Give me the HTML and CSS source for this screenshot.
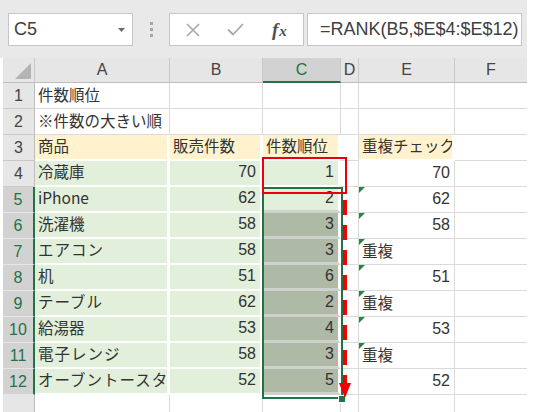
FILE: index.html
```html
<!DOCTYPE html>
<html lang="ja">
<head>
<meta charset="utf-8">
<title>RANK</title>
<link rel="stylesheet" href="styles.css">
</head>
<body>
<div class="app">
  <div class="topbar">
    <div class="namebox">
      <span class="nb-text">C5</span>
      <svg class="caret" width="7" height="4" viewBox="0 0 7 4"><path d="M0 0H7L3.5 4Z" fill="#6b6b6b"/></svg>
    </div>
    <div class="grip"><i></i><i></i><i></i></div>
    <div class="fxbox">
      <svg class="ic-x" width="14" height="14" viewBox="0 0 14 14"><path d="M1 1L13 13M13 1L1 13" stroke="#a8a8a8" stroke-width="1.6" fill="none"/></svg>
      <svg class="ic-ok" width="17" height="13" viewBox="0 0 17 13"><path d="M1 6.5L6 11.5L16 1" stroke="#a8a8a8" stroke-width="1.8" fill="none"/></svg>
      <span class="fx"><i>f</i><i class="fx2">x</i></span>
    </div>
    <div class="formula">=RANK(B5,$E$4:$E$12)</div>
  </div>
  <div class="sheet">
    <div class="h corner"><svg width="16" height="16" viewBox="0 0 16 16"><path d="M16 0V16H0Z" fill="#b4b4b4"/></svg></div>
    <div class="h">A</div><div class="h">B</div><div class="h hsel">C</div><div class="h">D</div><div class="h">E</div><div class="h">F</div>

    <div class="r">1</div><div class="c">件数順位</div><div class="c"></div><div class="c"></div><div class="c"></div><div class="c"></div><div class="c"></div>
    <div class="r">2</div><div class="c">※件数の大きい順</div><div class="c"></div><div class="c"></div><div class="c"></div><div class="c"></div><div class="c"></div>
    <div class="r">3</div><div class="c y">商品</div><div class="c y">販売件数</div><div class="c y">件数順位</div><div class="c"></div><div class="c y">重複チェック</div><div class="c"></div>
    <div class="r">4</div><div class="c g">冷蔵庫</div><div class="c g n">70</div><div class="c g n">1</div><div class="c"></div><div class="c n">70</div><div class="c"></div>
    <div class="r rs">5</div><div class="c g">iPhone</div><div class="c g n">62</div><div class="c g n act">2</div><div class="c"></div><div class="c n err">62</div><div class="c"></div>
    <div class="r rs">6</div><div class="c g">洗濯機</div><div class="c g n">58</div><div class="c s n">3</div><div class="c"></div><div class="c n err">58</div><div class="c"></div>
    <div class="r rs">7</div><div class="c g kana">エアコン</div><div class="c g n">58</div><div class="c s n">3</div><div class="c"></div><div class="c err">重複</div><div class="c"></div>
    <div class="r rs">8</div><div class="c g">机</div><div class="c g n">51</div><div class="c s n">6</div><div class="c"></div><div class="c n err">51</div><div class="c"></div>
    <div class="r rs">9</div><div class="c g kana">テーブル</div><div class="c g n">62</div><div class="c s n">2</div><div class="c"></div><div class="c err">重複</div><div class="c"></div>
    <div class="r rs">10</div><div class="c g">給湯器</div><div class="c g n">53</div><div class="c s n">4</div><div class="c"></div><div class="c n err">53</div><div class="c"></div>
    <div class="r rs">11</div><div class="c g kana">電子レンジ</div><div class="c g n">58</div><div class="c s n">3</div><div class="c"></div><div class="c err">重複</div><div class="c"></div>
    <div class="r rs">12</div><div class="c g kana">オーブントースター</div><div class="c g n">52</div><div class="c s n">5</div><div class="c"></div><div class="c n">52</div><div class="c"></div>
    <div class="r"></div><div class="c"></div><div class="c"></div><div class="c"></div><div class="c"></div><div class="c"></div><div class="c"></div>

    <div class="selbox"></div>
    <div class="handle"></div>
    <div class="redbox"></div>
    <svg class="arrow" width="14" height="200" viewBox="0 0 14 200">
      <path d="M7 0V184" stroke="#f00000" stroke-width="4" stroke-dasharray="15 10" fill="none"/>
      <path d="M1 183H13L7 198Z" fill="#f00000"/>
    </svg>
  </div>
</div>
</body>
</html>
```

FILE: styles.css
```css
html, body {
  margin: 0;
  padding: 0;
  background: #ffffff;
}
body {
  width: 544px;
  height: 412px;
  overflow: hidden;
}
.app {
  width: 527px;
}
.topbar {
  height: 58px;
  box-sizing: border-box;
  background: #e9e9e9;
  display: flex;
  align-items: flex-start;
  padding-top: 13px;
}
.namebox {
  margin-left: 8px;
  width: 125px;
  height: 33px;
  box-sizing: border-box;
  background: #fff;
  border: 1px solid #c6c6c6;
  display: flex;
  align-items: center;
  justify-content: space-between;
  padding: 0 7px 0 5px;
  font: 18px "Liberation Sans", Arial, sans-serif;
  color: #404040;
}
.caret {
  display: block;
}
.grip {
  width: 36px;
  height: 33px;
  display: flex;
  flex-direction: column;
  align-items: center;
  justify-content: center;
  gap: 3px;
}
.grip i {
  display: block;
  width: 3px;
  height: 3px;
  background: #a5a5a5;
}
.fxbox {
  width: 135px;
  height: 33px;
  box-sizing: border-box;
  background: #fff;
  border: 1px solid #c6c6c6;
  display: flex;
  align-items: center;
}
.ic-x {
  margin-left: 16px;
}
.ic-ok {
  margin-left: 27px;
}
.fx {
  margin-left: 28px;
  font: italic bold 19px "Liberation Serif", "Times New Roman", serif;
  color: #505050;
}
.fx i {
  font-style: italic;
}
.fx2 {
  font-size: 15px;
  margin-left: 1px;
}
.formula {
  margin-left: 3px;
  width: 215px;
  height: 33px;
  box-sizing: border-box;
  background: #fff;
  border: 1px solid #c6c6c6;
  display: flex;
  align-items: center;
  padding-left: 12px;
  font: 18px "Liberation Sans", Arial, sans-serif;
  color: #404040;
  white-space: nowrap;
}
.sheet {
  margin-left: 3px;
  position: relative;
  display: grid;
  grid-template-columns: 32px 135px 93px 78px 18px 96px 73px;
  grid-template-rows: 25px repeat(13, 26px);
  height: 354px;
  overflow: hidden;
}
.h {
  box-sizing: border-box;
  background: #e6e6e6;
  border-right: 1px solid #c9c9c9;
  border-bottom: 1px solid #bdbdbd;
  display: flex;
  align-items: center;
  justify-content: center;
  font: 16px "Liberation Sans", Arial, sans-serif;
  color: #444;
}
.corner {
  justify-content: flex-end;
  align-items: flex-end;
  padding: 0 3px 3px 0;
}
.corner svg {
  display: block;
}
.hsel {
  background: #d2d2d2;
  color: #217346;
  border-bottom: 2px solid #217346;
}
.r {
  box-sizing: border-box;
  background: #e6e6e6;
  border-right: 1px solid #bdbdbd;
  border-bottom: 1px solid #c9c9c9;
  display: flex;
  align-items: center;
  justify-content: center;
  font: 16px "Liberation Sans", Arial, sans-serif;
  color: #444;
}
.rs {
  background: #d2d2d2;
  color: #217346;
  border-right: 2px solid #217346;
  border-bottom-color: #e6e6e6;
}
.c {
  box-sizing: border-box;
  border-right: 1px solid #dadada;
  border-bottom: 1px solid #dadada;
  display: flex;
  align-items: center;
  padding: 0 3px 2px 3px;
  font: 15.5px "Noto Sans CJK JP", "Noto Sans", sans-serif;
  line-height: 1;
  color: #333;
  white-space: nowrap;
  overflow: hidden;
  position: relative;
}
.kana {
  letter-spacing: 1px;
}
.n {
  justify-content: flex-end;
  font-family: "Liberation Sans", Arial, sans-serif;
  font-size: 16px;
  padding-right: 4px;
}
.y {
  background: #fff2cc;
  border-right: 3px solid #fff;
  border-bottom: 2px solid #fff;
}
.g {
  background: #e2efda;
  border-right: 3px solid #fff;
  border-bottom: 2px solid #fff;
}
.s {
  background: #aeb9a6;
  border-right: 3px solid #fff;
  border-bottom: 3px solid #cfd2cc;
}
.act {
  border-bottom: 3px solid #cfd2cc;
}
.err::before {
  content: "";
  position: absolute;
  left: 0;
  top: 0;
  width: 0;
  height: 0;
  border-top: 6px solid #1f8a3a;
  border-right: 6px solid transparent;
}
.selbox {
  position: absolute;
  left: 259px;
  top: 129px;
  width: 81px;
  height: 212px;
  box-sizing: border-box;
  border: 2px solid #217346;
  pointer-events: none;
}
.handle {
  position: absolute;
  left: 335px;
  top: 337px;
  width: 6px;
  height: 6px;
  background: #217346;
  border: 1px solid #fff;
}
.redbox {
  position: absolute;
  left: 259px;
  top: 99px;
  width: 85px;
  height: 37px;
  box-sizing: border-box;
  border: 2px solid #e60012;
}
.arrow {
  position: absolute;
  left: 335px;
  top: 142px;
}
```
